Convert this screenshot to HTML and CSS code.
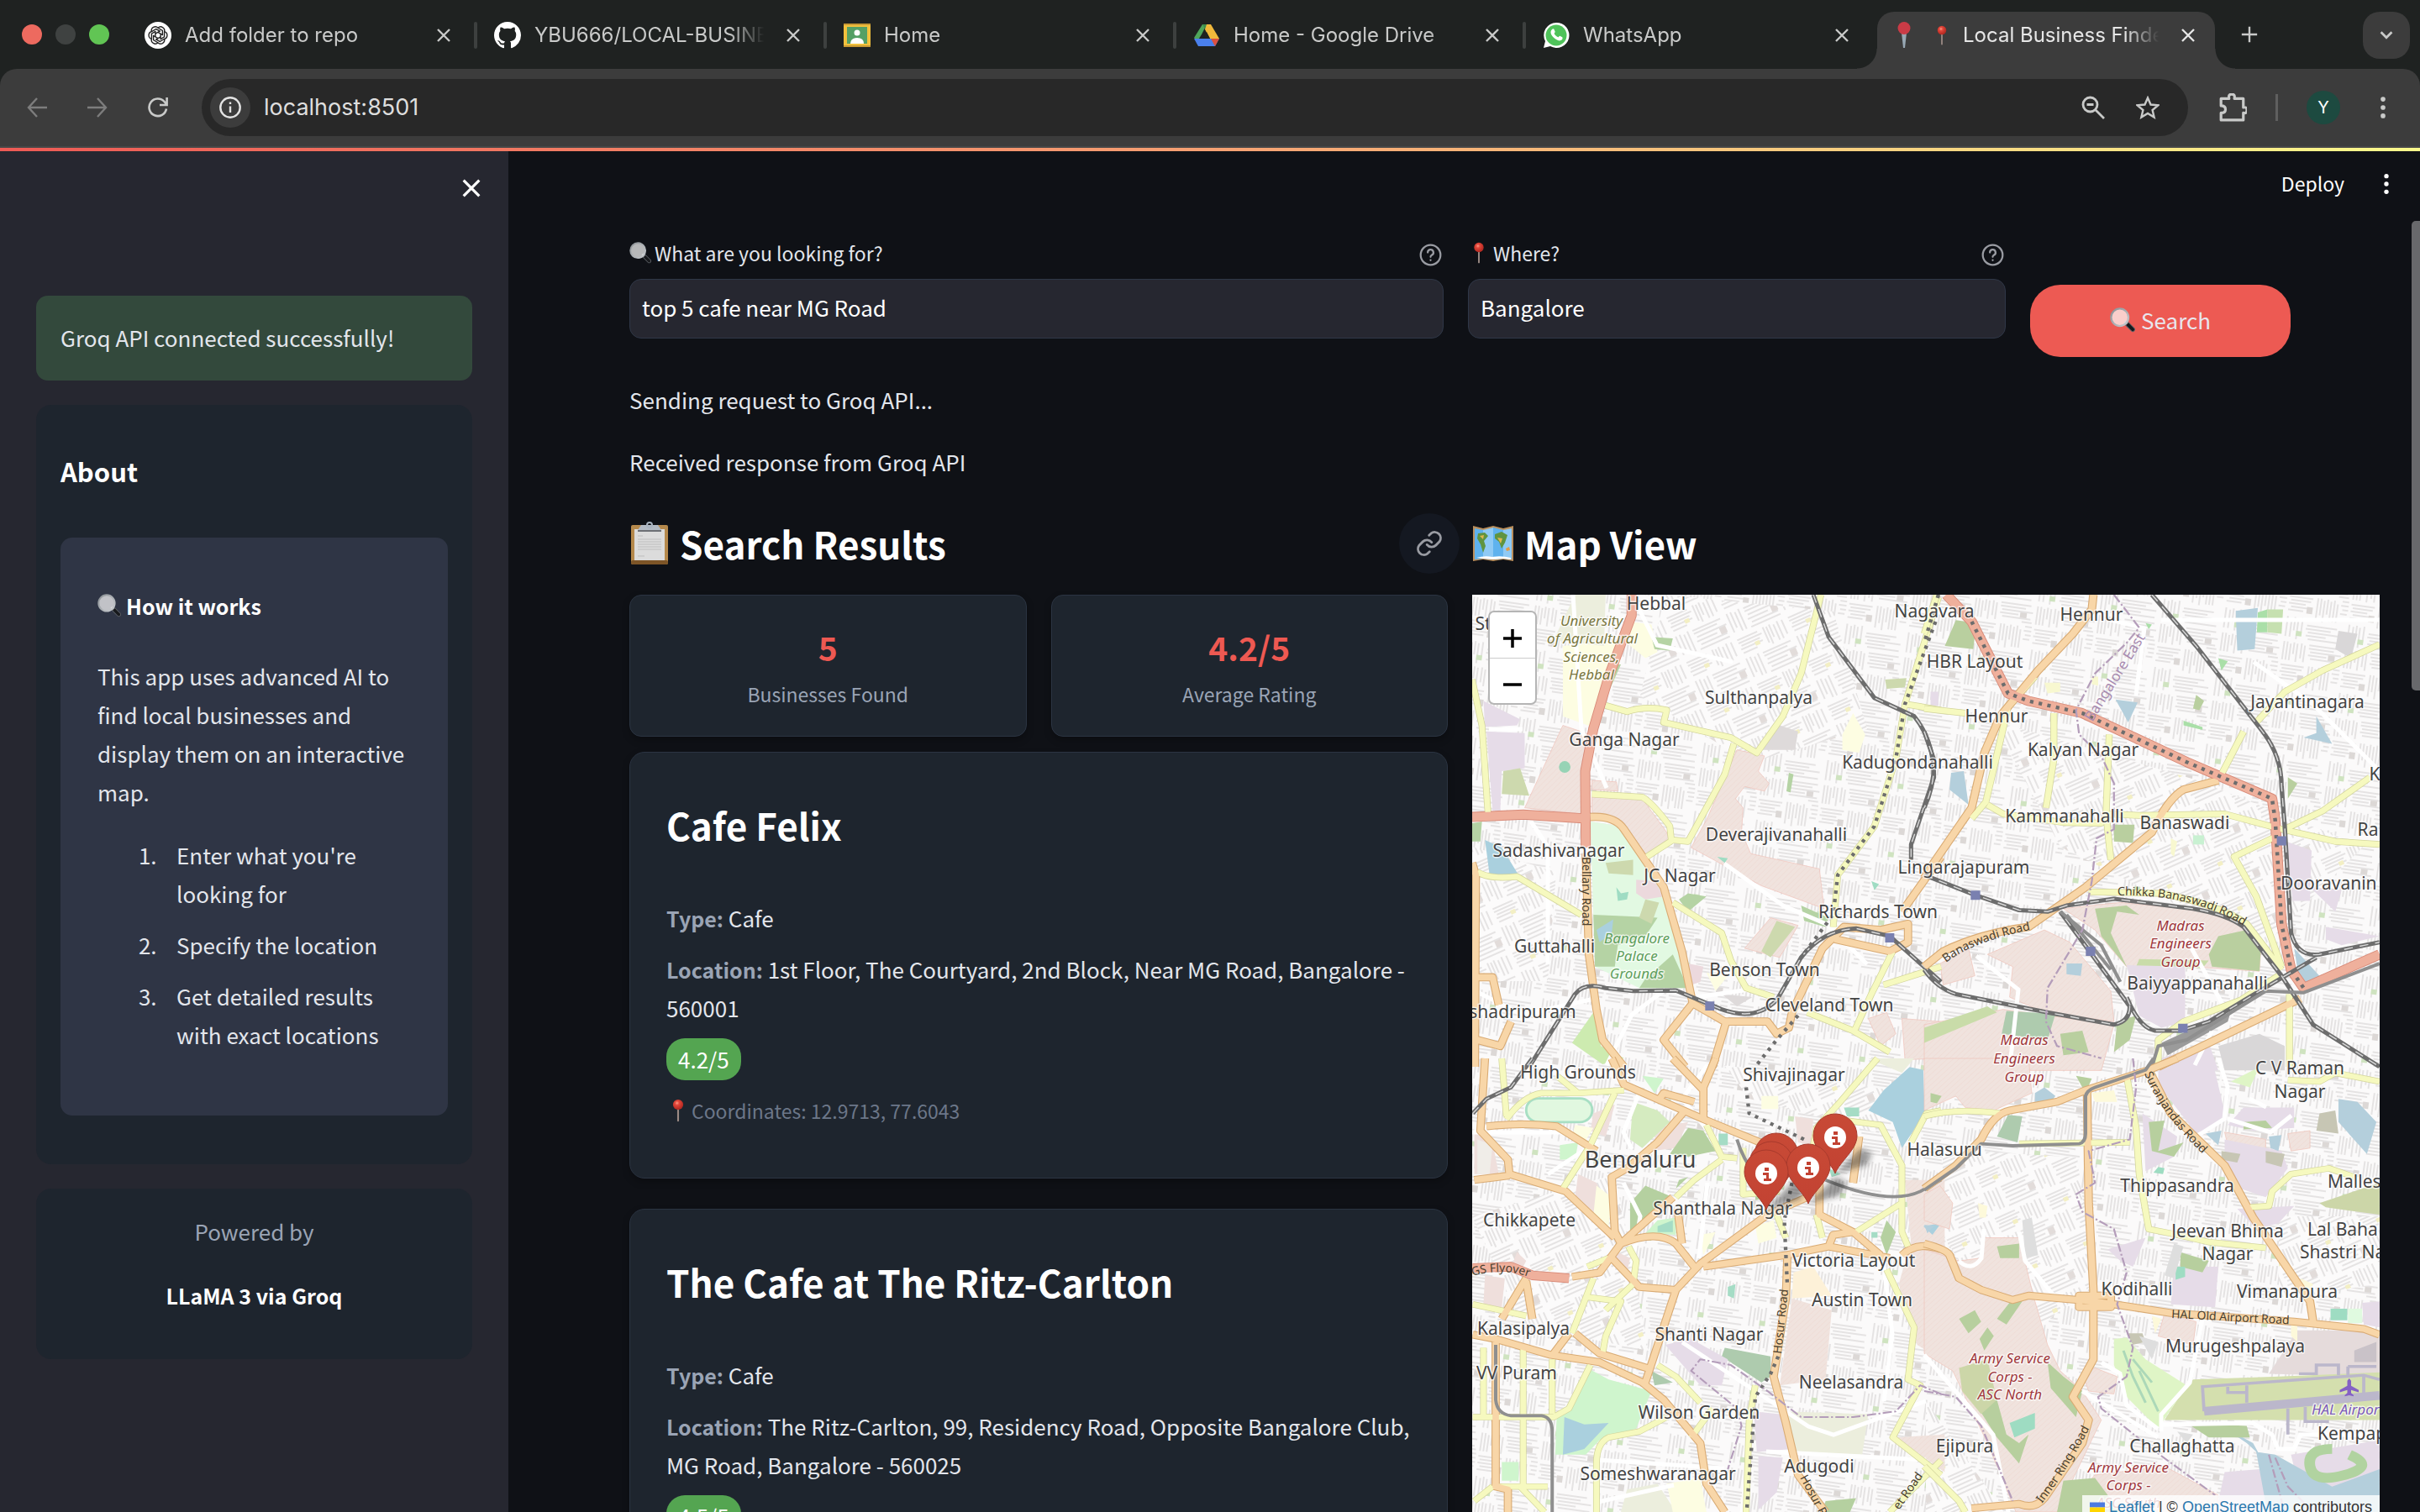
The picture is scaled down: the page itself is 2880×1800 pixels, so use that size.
FILE: index.html
```html
<!DOCTYPE html>
<html lang="en">
<head>
<meta charset="utf-8">
<title>Local Business Finder</title>
<link rel="stylesheet" href="styles.css">
</head>
<body>
<svg class="sprite" aria-hidden="true">
  <defs>
    <linearGradient id="metal" x1="0" y1="0" x2="1" y2="1"><stop offset="0" stop-color="#8a9094"/><stop offset="1" stop-color="#c9ccd0"/></linearGradient>
    <radialGradient id="ball" cx=".4" cy=".35" r=".6"><stop offset="0" stop-color="#ff9a85"/><stop offset=".35" stop-color="#e2463a"/><stop offset="1" stop-color="#b52a22"/></radialGradient>
    <symbol id="i-close" viewBox="0 0 24 24"><path d="M5 5l14 14M19 5L5 19" fill="none" stroke="currentColor" stroke-width="2.4"/></symbol>
    <symbol id="i-loupe" viewBox="0 0 32 32">
      <path d="M22 21l7 7" stroke="#5c6066" stroke-width="6" stroke-linecap="round"/>
      <path d="M22.500 21.500l6.500 6.500" stroke="#17191c" stroke-width="4" stroke-linecap="round"/>
      <path d="M19 18l3 3" stroke="#8a8d90" stroke-width="3.500"/>
      <circle cx="12.500" cy="12.500" r="11" fill="#fff" fill-opacity=".7" stroke="url(#metal)" stroke-width="2.400"/>
    </symbol>
    <symbol id="i-pin" viewBox="0 0 16 32">
      <path d="M8 12v18" stroke="#9b8a84" stroke-width="2.4" stroke-linecap="round"/>
      <circle cx="8" cy="8" r="7" fill="url(#ball)"/>
    </symbol>
    <symbol id="i-help" viewBox="0 0 24 24"><g fill="none" stroke="currentColor" stroke-width="2" stroke-linecap="round"><circle cx="12" cy="12" r="10.5"/><path d="M9 9.4a3 3 0 1 1 4.3 2.7c-.9.5-1.3 1-1.3 1.9M12 17.4v.2"/></g></symbol>
    <symbol id="i-dots" viewBox="0 0 24 48"><g fill="currentColor"><circle cx="12" cy="10" r="4"/><circle cx="12" cy="24" r="4"/><circle cx="12" cy="38" r="4"/></g></symbol>
  </defs>
</svg>

<header class="browser">
  <div class="tabstrip">
    <div class="lights"><span class="light red"></span><span class="light grey"></span><span class="light green"></span></div>
    <div class="tab">
      <svg class="fav" viewBox="0 0 32 32"><circle cx="16" cy="16" r="16" fill="#fff"/><g fill="none" stroke="#222" stroke-width="1.4"><g id="petal"><path d="M16 7.2a4.6 4.6 0 0 1 7.6 4.6v6l-5 3"/><path d="M16 12.400l5.200 3"/></g><use href="#petal" transform="rotate(60 16 16)"/><use href="#petal" transform="rotate(120 16 16)"/><use href="#petal" transform="rotate(180 16 16)"/><use href="#petal" transform="rotate(240 16 16)"/><use href="#petal" transform="rotate(300 16 16)"/></g></svg>
      <span class="tab-title">Add folder to repo</span>
      <button class="tab-close" aria-label="Close tab"><svg><use href="#i-close"/></svg></button>
    </div>
    <div class="tab">
      <svg class="fav" viewBox="0 0 16 16"><path fill="#fff" d="M8 0C3.580 0 0 3.580 0 8c0 3.540 2.290 6.530 5.470 7.590.4.070.550-.170.550-.380 0-.190-.010-.820-.010-1.490-2.010.370-2.530-.490-2.690-.940-.090-.230-.480-.940-.820-1.130-.280-.150-.680-.520-.010-.530.630-.010 1.080.580 1.230.820.720 1.210 1.870.870 2.330.660.070-.520.280-.870.510-1.070-1.780-.2-3.640-.890-3.640-3.950 0-.870.310-1.590.820-2.150-.080-.2-.360-1.020.080-2.120 0 0 .670-.210 2.200.820a7.600 7.600 0 0 1 4 0c1.530-1.040 2.200-.820 2.200-.820.440 1.100.160 1.920.080 2.120.510.560.820 1.270.820 2.150 0 3.070-1.870 3.750-3.650 3.950.290.250.540.730.540 1.480 0 1.070-.010 1.930-.010 2.200 0 .210.150.460.550.380A8 8 0 0 0 16 8c0-4.420-3.580-8-8-8z"/></svg>
      <span class="tab-title">YBU666/LOCAL-BUSINESS</span>
      <button class="tab-close" aria-label="Close tab"><svg><use href="#i-close"/></svg></button>
    </div>
    <div class="tab">
      <svg class="fav" viewBox="0 0 32 32"><rect y="2" width="32" height="28" fill="#f2c13d"/><path d="M0 28h32v2H0zM0 2h32v2H0z" fill="#c99a34"/><rect x="4" y="6" width="24" height="20" fill="#55a065"/><circle cx="16" cy="13" r="3.500" fill="#fff"/><path d="M8 26q0-7 8-7t8 7z" fill="#fff"/></svg>
      <span class="tab-title">Home</span>
      <button class="tab-close" aria-label="Close tab"><svg><use href="#i-close"/></svg></button>
    </div>
    <div class="tab">
      <svg class="fav" viewBox="0 0 32 32"><path fill="#4fa55b" d="M11 3h5l-6 12-5 8-4-4z"/><path fill="#3b8b4a" d="M11 3h10l-5 9z"/><path fill="#f2b93b" d="M21 3l10 17H20l-6-11 2-6z"/><path fill="#4a80ec" d="M1 20h30l-5 9H6z"/><path fill="#dc5040" d="M21 20h10l-5 9z"/><path fill="#1f2221" d="M16 12l4 8h-8z"/></svg>
      <span class="tab-title">Home - Google Drive</span>
      <button class="tab-close" aria-label="Close tab"><svg><use href="#i-close"/></svg></button>
    </div>
    <div class="tab">
      <svg class="fav" viewBox="0 0 32 32"><path fill="#fff" d="M16 1a15 15 0 1 1-7 28l-8 2 2-8A15 15 0 0 1 16 1z"/><circle cx="16" cy="16" r="12.500" fill="#4fc35a"/><path fill="#fff" d="M11 9c1-1 2-1 2.500 0l1.200 2.800c.2.700-1.200 1.700-1 2.200 1 2 2.500 3.400 4.500 4.300.6.300 1.500-1.800 2.200-1.600l2.800 1.500c.8.500.3 2.700-.7 3.400-2 1.400-4.500 1-8-1.600-3.500-2.700-5-5.500-5-7.500 0-1.500.7-2.700 1.500-3.500z"/></svg>
      <span class="tab-title">WhatsApp</span>
      <button class="tab-close" aria-label="Close tab"><svg><use href="#i-close"/></svg></button>
    </div>
    <div class="tab active">
      <svg class="fav" viewBox="0 0 32 32"><path d="M13 13h6l-2 18h-2z" fill="#98a8b4"/><circle cx="16" cy="7.500" r="7.500" fill="#c93b46"/></svg>
      <span class="tab-title"><svg class="tab-pin"><use href="#i-pin"/></svg>Local Business Finder</span>
      <button class="tab-close" aria-label="Close tab"><svg><use href="#i-close"/></svg></button>
    </div>
    <button class="new-tab" aria-label="New tab"><svg viewBox="0 0 24 24"><path d="M12 2v20M2 12h20" stroke="currentColor" stroke-width="2.600"/></svg></button>
    <button class="tab-search" aria-label="Search tabs"><svg viewBox="0 0 24 24"><path d="M5 8l7 7 7-7" fill="none" stroke="currentColor" stroke-width="3"/></svg></button>
  </div>
  <div class="toolbar">
    <nav class="nav">
      <button class="dim" aria-label="Back"><svg viewBox="0 0 24 24"><path d="M12 1L2 12l10 11M2 12h22" fill="none" stroke="currentColor" stroke-width="2.400"/></svg></button>
      <button class="dim" aria-label="Forward"><svg viewBox="0 0 24 24"><path d="M12 1l10 11-10 11M22 12H0" fill="none" stroke="currentColor" stroke-width="2.400"/></svg></button>
      <button aria-label="Reload"><svg viewBox="0 0 24 24"><path d="M22 13.500A10.300 10.300 0 1 1 19.600 5L22 8M22.600 0v9H14" fill="none" stroke="currentColor" stroke-width="2.600"/></svg></button>
    </nav>
    <div class="omnibox">
      <button class="site-info" aria-label="Site information"><svg viewBox="0 0 26 26"><g fill="none" stroke="currentColor" stroke-width="2.400"><circle cx="13" cy="13" r="11.700"/><path d="M13 11.500v7.500M13 6.500v2.600"/></g></svg></button>
      <input class="url" aria-label="Address" value="localhost:8501">
      <button aria-label="Zoom"><svg viewBox="0 0 28 28"><g fill="none" stroke="currentColor" stroke-width="2.800"><circle cx="10.500" cy="10.500" r="8.500"/><path d="M17 17l10 10M6.500 10.500h8"/></g></svg></button>
      <button aria-label="Bookmark"><svg viewBox="0 0 28 28"><path d="M14 2.500l3.500 8 8.800.8-6.700 5.700 2 8.600L14 21l-7.600 4.600 2-8.600-6.700-5.700 8.800-.8z" fill="none" stroke="currentColor" stroke-width="2.400"/></svg></button>
    </div>
    <div class="actions">
      <button aria-label="Extensions"><svg viewBox="0 0 32 32"><path d="M3 6h9q-1-5 3-5t3 5h10v10q4-1 4 3t-4 3v8H3v-8q5 0 5-4t-5-4z" fill="none" stroke="currentColor" stroke-width="3" stroke-linejoin="round"/></svg></button>
      <span class="bar"></span>
      <button class="avatar" aria-label="Profile">Y</button>
      <button aria-label="Menu"><svg class="dots"><use href="#i-dots"/></svg></button>
    </div>
  </div>
</header>

<div class="rainbow"></div>

<div class="app">
  <aside class="sidebar">
    <div class="sidebar-head"><button aria-label="Close sidebar"><svg><use href="#i-close"/></svg></button></div>
    <div class="sidebar-body">
      <p class="success">Groq API connected successfully!</p>
      <section class="panel about">
        <h3>About</h3>
        <div class="how">
          <h4><svg class="emoji"><use href="#i-loupe"/></svg>How it works</h4>
          <p>This app uses advanced AI to find local businesses and display them on an interactive map.</p>
          <ol><li>Enter what you're looking for</li><li>Specify the location</li><li>Get detailed results with exact locations</li></ol>
        </div>
      </section>
      <section class="panel powered"><p>Powered by</p><p><strong>LLaMA 3 via Groq</strong></p></section>
    </div>
  </aside>

  <main class="main">
    <div class="app-head"><button class="deploy">Deploy</button><button aria-label="App menu"><svg class="dots"><use href="#i-dots"/></svg></button></div>
    <div class="content">
      <form class="search">
        <div class="field">
          <div class="label-row"><label for="what"><svg class="emoji"><use href="#i-loupe"/></svg>What are you looking for?</label><button type="button" aria-label="Help"><svg><use href="#i-help"/></svg></button></div>
          <input id="what" value="top 5 cafe near MG Road">
        </div>
        <div class="field">
          <div class="label-row"><label for="where"><svg class="emoji"><use href="#i-pin"/></svg>Where?</label><button type="button" aria-label="Help"><svg><use href="#i-help"/></svg></button></div>
          <input id="where" value="Bangalore">
        </div>
        <button type="button" class="go"><svg class="emoji"><use href="#i-loupe"/></svg>Search</button>
      </form>
      <p class="log">Sending request to Groq API...</p>
      <p class="log">Received response from Groq API</p>

      <div class="columns">
        <section class="results">
          <h2>
            <svg class="clipboard" viewBox="0 0 48 52"><rect x="2" y="4" width="44" height="47" rx="2" fill="#b5894c"/><rect x="2" y="46" width="44" height="5" rx="2" fill="#7d5527"/><rect x="6" y="9" width="36" height="37" fill="#dcdcdc"/><path d="M10 17h6M10 21h28M10 24h28M10 27h28M10 30h28M10 33h28M10 41h8" stroke="#bdbdbd"/><path d="M10 10l4-6h20l4 6z" fill="#b3bac3"/><path d="M10 10h28v2H10z" fill="#6d7075"/><circle cx="24" cy="4" r="3" fill="none" stroke="#a9b4c0" stroke-width="2"/></svg>
            Search Results
            <a class="anchor" href="#results" aria-label="Link to results"><svg viewBox="0 0 24 24"><path d="M10 13a5 5 0 0 0 7.500.5l3-3a5 5 0 0 0-7-7l-1.700 1.700M14 11a5 5 0 0 0-7.500-.5l-3 3a5 5 0 0 0 7 7l1.700-1.700" fill="none" stroke="currentColor" stroke-width="2" stroke-linecap="round"/></svg></a>
          </h2>
          <div class="metrics">
            <div class="metric"><strong>5</strong><span>Businesses Found</span></div>
            <div class="metric"><strong>4.2/5</strong><span>Average Rating</span></div>
          </div>
          <article class="card">
            <h3>Cafe Felix</h3>
            <p><b>Type:</b> Cafe</p>
            <p><b>Location:</b> 1st Floor, The Courtyard, 2nd Block, Near MG Road, Bangalore - 560001</p>
            <span class="badge">4.2/5</span>
            <p class="coords"><svg class="emoji"><use href="#i-pin"/></svg>Coordinates: 12.9713, 77.6043</p>
          </article>
          <article class="card">
            <h3>The Cafe at The Ritz-Carlton</h3>
            <p><b>Type:</b> Cafe</p>
            <p><b>Location:</b> The Ritz-Carlton, 99, Residency Road, Opposite Bangalore Club, MG Road, Bangalore - 560025</p>
            <span class="badge">4.5/5</span>
          </article>
        </section>

        <section class="map-col">
          <h2>
            <svg class="mapicon" viewBox="0 0 50 44"><path d="M1 1l12 3L25 1l12 3 12-3v42l-12-2-12 2-12-2-12 2z" fill="#b98f5d"/><path d="M3 4l10 2v34L3 41zM25 3l12 3v34l-12 1z" fill="#5fb2ee"/><path d="M13 6l12-3v38l-12-1zM37 6l10-2v37l-10-1z" fill="#8fcaf5"/><path d="M7 10l8-1 4 4-5 6 2 6-3 8-3-10-4-7zM27 11l8-3 7 4-3 9-4 7-3-8-5-4z" fill="#5f9440"/><path d="M9 13l5-1-1 5zM30 15l6 1-2 6z" fill="#e0b64e"/><path d="M40 28l4-2 1 4-4 1z" fill="#e39b45"/><path d="M5 39q10-3 19-1 10-2 22 1v2l-9-1-12 1-12-1z" fill="#fff"/></svg>
            Map View
          </h2>
          <div class="map">
            <svg class="map-art" viewBox="0 0 1080 1100" preserveAspectRatio="xMidYMid slice">
              <defs>
                <pattern id="st" width="74" height="82" patternUnits="userSpaceOnUse" patternTransform="rotate(8)">
                  <rect width="74" height="82" fill="#fbfafa"/>
                  <path d="M3 2v22M7 2v22M11 4v20M15 2v14M19 3v22M24 2v18M28 4v20M33 3h36M33 7h30M35 11h37M33 15h22M36 19h34M60 23h12M2 30h28M4 34h24M2 38h20M5 42h26M2 46h18M36 28v26M40 28v20M44 30v26M48 28v18M52 30v24M56 28v26M60 32v22M65 28h8M64 33h9M66 38h7M64 43h8M3 54v24M8 56v22M12 54v16M16 56v24M21 54v20M27 62h36M26 66h30M29 70h40M27 74h24M30 78h38" stroke="#d0cdcd" stroke-width="1" fill="none"/>
                  <path d="M57 12h8v6h-8zM24 40h7v8h-7z" fill="#dcd8d6"/><path d="M15 70h7v6h-7z" fill="#cfe3c0"/>
                </pattern>
                <pattern id="st2" width="66" height="58" patternUnits="userSpaceOnUse" patternTransform="rotate(-24)">
                  <rect width="66" height="58" fill="#fcfbfb"/>
                  <path d="M2 4h26M2 8h30M4 12h24M2 16h28M3 21h18M36 2v20M40 3v22M44 2v16M49 4v20M54 2v22M60 3v18M3 28v24M8 28v20M13 30v24M18 28v26M24 30h36M24 34h30M26 39h38M24 44h26M27 49h34M24 54h38" stroke="#cecbcb" stroke-width="1" fill="none"/>
                  <path d="M54 40h8v8h-8z" fill="#e2dcda"/><path d="M20 14h6v5h-6z" fill="#f3efc4"/>
                </pattern>
                <pattern id="hatch" width="13" height="13" patternUnits="userSpaceOnUse" patternTransform="rotate(45)"><rect width="13" height="13" fill="#f0e3de"/><path d="M0 0v13" stroke="#eed2cb" stroke-width="2"/></pattern>
                <filter id="soft" x="-50%" y="-50%" width="200%" height="200%"><feGaussianBlur stdDeviation="3"/></filter>
                <linearGradient id="mk" x1="0" x2="0" y1="0" y2="1"><stop offset="0" stop-color="#c84a36"/><stop offset="1" stop-color="#c24232"/></linearGradient>

                <g id="y1"><path d="M33 300L65 450 85 740M1175 22L1110 280 1050 420 965 540 880 490 660 440 670 400Q600 385 540 405L470 385M890 510L860 610 800 720 740 830 690 825 605 880M425 675L590 685Q620 700 680 780L685 825M1560 30L1450 380 1568 400M1450 380L1420 560 1350 780 1230 940 1215 1110M50 930Q90 955 180 945L390 1070M690 1030L850 1130 880 1220 930 1310 1020 1340M1130 1390L1280 1450 1400 1520M1410 1190L1340 1330 1280 1460M1380 1300L1568 1240"/></g>
                <g id="o1"><path d="M420 750Q500 745 530 790L660 980 720 1190 755 1360 660 1480 730 1568M405 870L415 1200 440 1380 460 1480 530 1568M33 900L45 940 42 1568M50 1275H100L120 1365M160 1420L125 1500 50 1480M755 1360L860 1420 1000 1420 1030 1460 1070 1440 1080 1390 1180 1180 1250 1110 1370 1120 1460 1100 1460 1160 1400 1190 1220 1150M865 1420L820 1568M1440 1060L1568 880"/></g>
                <g id="r1"><path d="M555 22V90L480 290 430 460 403 600 405 850M33 750L200 742 405 755"/></g>
                <g id="t1"><path d="M1150 22L1200 160 1350 360 1480 420Q1545 500 1545 620L1470 840V890M220 1568L370 1330Q400 1290 470 1310L560 1320 700 1318 850 1380Q960 1420 1030 1350L1110 1210Q1180 1120 1290 1115L1400 1140 1568 1290"/></g>

                <g id="y2"><path d="M350 290L265 390 245 480 195 700 150 755M0 395L130 410M410 410V560L385 720M585 480L575 740 590 890M200 710L250 740 440 768 560 770 580 740 680 745 950 740 1130 790 1300 830 1440 840M1440 185L1260 270 1140 340 1050 440M1010 470L940 610M1140 790L1260 730 1410 620M1110 815L980 880 1050 1010 1130 1240M520 995L750 1000Q940 1040 1020 1100L1130 1250M1155 1330V1568M740 1568V1480L820 1420 1000 1350 1120 1270M40 22L0 150"/></g>
                <g id="o2"><path d="M535 22L530 70 470 150 360 270 240 420 190 540 150 720 30 900 0 950M0 1240L60 1190Q180 1130 330 1110L510 980 720 800Q770 690 820 660L930 630M740 1568L860 1510 1190 1345"/></g>
                <g id="r2"><path d="M70 22L150 110 265 345 330 370 500 410 830 570 1100 690 1110 760 1130 1100 1160 1250 1200 1310 1440 1200"/></g>
                <g id="t2"><path d="M720 22L860 190 1070 470Q1130 550 1130 650L1140 780 1160 1130Q1180 1210 1250 1200L1440 1160M0 940L160 1005 300 1055 390 1060 450 1040 600 1018 850 1050Q960 1070 1010 1110L1130 1270 1230 1430 1440 1568M0 1250Q40 1310 100 1330L390 1390 600 1430Q650 1420 650 1370L530 1200 430 1060M640 1340Q680 1440 730 1450H810L900 1420 1060 1320 1240 1210M0 470L30 560Q35 640 0 720"/></g>

                <g id="y3"><path d="M130 0L145 200M145 210Q200 130 260 120L380 120 530 110M500 120L420 300 330 450M310 60L380 120M1360 0L1230 160 1160 240 1150 300M1220 210L1370 230 1440 370V600L1460 650M1440 500L1290 600M800 230L850 340 900 345M850 350L760 420 700 480M920 310V470L1040 460M1160 540L1180 620M1030 540L1060 620M545 650L570 700 560 780 470 870M430 760L360 950M410 720L480 690M410 825L520 840 470 960 460 1020M420 1060L350 1210 300 1240H35M70 1000V1240M200 1000V1480M295 1040V1230M640 1060L700 1100 780 1190M670 1240L580 1290 480 1310Q440 1330 440 1400V1568M960 1130L940 1250 930 1568M1390 730L1480 930 1460 1110 1500 1130 1410 1310 1568 1440M1568 1390L1400 1568M35 850L210 890M1568 180L1520 190 1470 290M820 1210L750 1310M40 1530L100 1480M190 1480L270 1568M100 1480H280"/></g>
                <g id="o3"><path d="M75 0L60 250 150 350 155 400 340 460 500 620M40 420L155 405M80 235Q200 220 310 235L440 320M490 0L530 90 660 150 790 210 975 290M690 0L790 110M730 180L640 290 540 380 490 410 500 600 520 640M830 0L790 100V210M520 640L690 480M520 640Q640 590 700 640L760 720M705 520L720 640M520 640L450 740 360 755M490 690L580 790 700 800 780 710 1000 540 1130 480M700 800L600 1120M790 720L1060 680 1200 650 1300 670 1400 690M35 955L110 970 290 1025 450 1050 590 1120 660 1180 780 1330 800 1470 860 1568M370 950L450 1020 620 1075M350 950L300 1020M210 760L130 900M210 770L230 900M1065 680L1060 830 1020 1100 1060 1260 1100 1440 1190 1568M1170 420V540L1280 600 1370 680M1300 270L1280 430M1200 650L1215 610 1280 600M1440 680Q1490 630 1568 660M110 980V1480L150 1490V1568M640 150L660 120 760 150"/></g>
                <g id="r3"><path d="M35 725L160 720 230 750 350 760"/></g>
                <g id="t3"><path d="M35 190L80 140 160 100 230 0"/></g>

                <g id="y4"><path d="M0 200Q100 170 240 190M640 60L670 240 680 400 710 590 780 605 900 635 1080 655M300 295L650 290M1030 515L1090 510 1100 460 1160 400 1280 380 1360 410M1150 75L1250 80 1300 50 1440 80M0 1410L110 1530 130 1568"/></g>
                <g id="o4"><path d="M0 450L100 370 180 280Q220 190 270 180L420 150 510 110 710 40 800 0M515 110L520 500 535 800V1040L470 1170 520 1250 500 1330 380 1520Q350 1560 300 1540L150 1555M0 640Q70 660 80 680L110 760 180 800 280 835 330 820 540 840 780 880 1170 910 1390 935 1440 955M710 40L780 190 950 370 1040 550 1220 840 1230 910M490 820H590V860H490Z"/></g>
                <path id="lp1" d="M564 438Q594 414 664 399"/>
                <path id="lp2" d="M768 358Q860 356 921 396"/>
                <path id="lp4" d="M678 1082Q706 1046 736 990"/>
                <path id="lp5" d="M800 570Q820 620 876 672"/>
                <path id="lp6" d="M0 811Q40 800 72 814"/>
              </defs>
              <rect width="1080" height="1102" fill="url(#st)"/>
              <path d="M230 0L430 20 470 160 330 200 200 120ZM620 150L860 220 1060 300 940 420 700 300ZM0 740L170 690 210 900 60 870ZM560 660L720 670 740 820 640 900 560 760ZM300 560L500 590 480 640 330 600ZM0 300L100 330 90 460 0 460ZM960 740H1080V820L960 840ZM540 960L640 1102H540Z" fill="url(#st2)"/>

              <!-- Land use, north west -->
              <g transform="matrix(.3635 0 0 .3635 -12 -8)">
                <path fill="url(#hatch)" stroke="#f0c4bb" stroke-width="2" d="M330 450L420 480 390 740 205 720ZM425 630L505 635 510 665 425 660ZM425 685L590 690 670 800 680 830 600 875 520 770 425 735ZM900 530L990 550 970 600 1005 640 990 665 925 650 895 690 920 720 915 800 945 870 1170 920 1185 1050 980 975 750 850 800 760ZM1010 1080L1100 1105 1040 1210 925 1180ZM1440 1410L1568 1420V1540L1450 1545ZM1330 1410L1390 1390 1420 1460 1370 1500Z"/>
                <path fill="#e6dce8" d="M70 370L190 430 180 450 75 455ZM80 470L205 475V590L130 600 125 730 100 730Z"/>
                <path fill="#fdfde2" d="M330 190L520 170 440 460 330 420ZM550 110L620 120 640 210 600 230 540 180ZM1280 410L1320 480 1300 540 1245 530 1245 480ZM660 1080L700 1140 690 1200 620 1130ZM800 1260L870 1270 830 1320Z"/>
                <path fill="#eceedd" d="M370 22H470L465 190 300 170Z"/>
                <path fill="#e2f9e2" d="M420 765L520 780 600 890 690 1080 740 1310 580 1310 435 1240Z"/>
                <path fill="#b5d3a4" d="M430 1070L540 1075 640 1080 600 1140 510 1170 500 1240 435 1240ZM690 1200L740 1310 580 1310 600 1280ZM620 160L690 165 680 205 630 200ZM710 1020L740 1000 800 1010 740 1060ZM33 770L65 765 60 830 33 830ZM1110 1040L1200 1080 1190 1110 1120 1090ZM1070 605L1085 610 1075 670 1062 665ZM480 340L500 250 520 250Z"/>
                <path fill="#cdd9ae" d="M470 900L560 890 560 940 480 935ZM600 1020L645 1030 620 1100 580 1080ZM135 600L190 590 220 680 130 675ZM1030 1090L1090 1110 1010 1210 980 1190ZM1385 300L1455 295 1450 325 1390 330Z"/>
                <path fill="#ecd9dd" d="M570 955L630 960 660 1010 600 1020 570 1000ZM740 1230L790 1240 780 1290 750 1300Z"/>
                <path fill="#cdebb0" d="M430 1390L455 1500 530 1540 460 1560 360 1490Z"/>
                <path fill="#aad0de" d="M75 825L130 850 185 940 90 940ZM440 1120L495 1085 490 1130 450 1160Z"/>
                <path fill="#dedada" d="M1040 450L1100 470 1090 530 980 530ZM850 1330L950 1340 900 1370Z"/>
                <circle cx="336" cy="586" r="19" fill="#97d3b5"/><path fill="#9fdcc3" d="M505 980L520 1000 545 995 540 1020 510 1025ZM1340 960L1365 970 1350 990ZM835 880L870 885 860 900Z"/>
              </g>
              <!-- Land use, north east -->
              <g transform="matrix(.3763 0 0 .3635 538 -8)">
                <path fill="url(#hatch)" stroke="#f0c4bb" stroke-width="2" d="M440 1050L620 1030 870 1055 1000 1100 1065 1180 1060 1255 840 1240 640 1240 540 1120ZM380 1120L460 1160 590 1320 600 1420 380 1390 270 1340 280 1240 200 1200ZM0 1430L250 1380 600 1430 560 1580H0ZM50 1230L140 1180 160 1270 60 1300Z"/>
                <path fill="#b9cf9f" d="M540 1050L640 1040 680 1070 610 1060 590 1130 640 1240 560 1140ZM930 1140L1020 1120 1065 1180 1060 1255 910 1240 900 1200ZM610 1420L670 1400 650 1480 600 1520ZM600 775H665L660 835 600 830ZM430 1460L500 1450 520 1520 440 1530ZM860 350L885 370 870 400 850 395ZM1150 620L1180 640 1150 690ZM100 105L165 115 155 200 65 190Z"/>
                <path fill="#aecbae" d="M260 1385L415 1395 390 1480 245 1460Z"/><path fill="#c9dca9" d="M0 1440L200 1370 230 1390 0 1490ZM680 1215L900 1220 880 1245 670 1240Z"/>
                <path fill="#e6dce8" d="M640 1235L825 1240V1420L750 1440 680 1400ZM1145 830L1225 860 1220 1025 1165 1025ZM750 1540L900 1490 930 1580H740ZM1220 980L1320 990 1300 1060ZM1270 1110L1440 1140 1320 1170 1270 1150ZM20 340H45V385H20Z"/>
                <path fill="#b4cfdc" d="M985 75L1055 65 1045 200 990 205ZM605 365L675 375 645 440ZM1240 420L1290 510 1200 490 1240 475ZM85 605L125 600 140 710 80 660ZM1170 1180L1250 1270 1190 1310ZM450 1230L500 1230 495 1270 450 1265Z"/>
                <path fill="#aadfa8" d="M1055 80L1085 70V145H1052ZM930 230L960 240 940 270ZM820 435L880 455V465L820 450ZM700 115L720 120 710 135Z"/><path fill="#c6e0b0" d="M1085 70L1135 70 1130 150 1085 145Z"/>
                <path fill="#d9d7d8" d="M930 1500L1060 1460 1140 1500V1580H950ZM1310 140L1370 150 1350 230 1300 200Z"/>
                <path fill="#9b9b9b" d="M750 1490L970 1385 960 1420 770 1530Z"/>
                <path fill="#f8f8d0" d="M380 310L430 310 430 340 390 345ZM780 820L800 830 790 880 780 870ZM530 290L550 290 550 320 530 315Z"/>
                <path fill="#c9f1d2" d="M850 810L885 810 885 840 850 840Z"/>
              </g>
              <!-- Land use, south west -->
              <g transform="matrix(.3635 0 0 .3444 -12 552)">
                <path fill="#efdfdc" d="M430 190L500 160 470 270 420 250ZM640 240L740 220 700 310 620 320ZM180 670L210 700 190 740 165 710ZM75 750L140 760 130 860 70 850ZM380 400L440 430 470 500 440 540 370 480ZM1090 200L1150 210 1140 300 1100 290ZM510 670L550 690 540 740 500 700ZM40 250L100 290 120 400 40 400Z"/>
                <path fill="url(#hatch)" d="M1080 830L1210 870 1190 1110 1040 1130ZM1430 780L1490 550 1580 540V1050L1490 990 1460 900ZM1450 420H1580V700L1470 640ZM1420 1310L1580 1300V1430Z"/>
                <path fill="#fdf1d8" d="M1085 740L1150 720 1210 820 1080 830Z"/>
                <path fill="#cff5cd" d="M410 1070L480 1110 620 1150 570 1280 450 1320 405 1370H305L310 1230 350 1200ZM130 1395H185V1460H130ZM590 60L660 70 630 120ZM320 300L380 290 370 350 320 350ZM640 560L700 550 700 610 600 605Z"/>
                <path fill="#aad0de" d="M335 1240L400 1265 480 1260 400 1350 330 1370ZM1465 30L1510 40 1515 190 1440 310 1410 220 1330 180 1380 110ZM1510 580L1568 570 1540 610Z"/>
                <path fill="#b5d0a0" d="M600 440L690 480 550 610V500ZM740 240L790 250 830 320 740 340 680 330ZM960 440L1000 480 960 490ZM1390 560L1420 600 1390 680 1370 620ZM1190 1530L1290 1520 1270 1568H1180ZM1230 1350L1280 1340 1270 1380ZM710 420L740 410 700 450Z"/>
                <path fill="#d5ebc0" d="M560 150L640 180 680 220 590 310 550 280Z"/>
                <path fill="#aecbae" d="M860 1000L1010 1030V1100L980 1120 850 1030ZM620 1080L690 1120 630 1130Z"/>
                <path fill="#e6dce8" d="M665 990L750 970 870 1040 850 1130 780 1130ZM955 1220L1040 1230 1080 1350 965 1360ZM970 1375L1050 1380 1030 1500 970 1560Z"/>
                <path fill="#eceedd" d="M1050 1220L1330 1230 1310 1370 1080 1370ZM540 1490L640 1470 700 1568H520ZM1330 0H1480L1440 50Z"/>
                <path fill="#fdfde2" d="M370 230L430 240 400 290 360 270ZM440 440L490 480 480 580 430 540ZM960 580L1020 560 1030 620 970 640ZM670 1470L780 1450 800 1568H690ZM980 130H1035V175H980ZM780 610L830 600 790 680Z"/>
                <path fill="#a5dcc5" d="M640 580L690 560 690 600 640 600ZM840 260H870V300H840ZM1250 170H1300V200H1260ZM1340 600H1360V620H1340ZM1200 380L1240 400 1210 410ZM870 790L895 780 890 830 870 820Z"/>
                <rect x="210" y="138" width="216" height="82" rx="40" fill="#e1f8e0" stroke="#a8dfc4" stroke-width="8"/>
                <path fill="#f0ede8" d="M50 280L100 300 90 400 50 400Z"/>
              </g>
              <!-- Land use, south east -->
              <g transform="matrix(.3763 0 0 .3444 538 552)">
                <path fill="url(#hatch)" stroke="#f0c4bb" stroke-width="2" d="M0 0H330L340 120 220 180 130 170 100 130 0 180ZM0 660L110 700 180 690 190 620H300L345 820 390 990 430 1080 500 1150 560 1250 420 1568H290L200 1330 90 1080 0 1020ZM540 1440L760 1410 930 1510 920 1580H420ZM500 1090L540 1070 610 1100 600 1160 520 1150ZM0 470L50 440 90 500 80 590 0 560ZM950 255L1080 280 1080 320 960 300ZM1150 260L1220 250V310L1160 320ZM760 880L860 910 850 990 740 960Z"/>
                <path fill="#e5dbdb" d="M1180 940H1440V1100L1090 1090Z"/>
                <path fill="#d4dfae" d="M850 1110L1120 1100 1440 1085V1250H760L800 1180Z"/>
                <path fill="none" stroke="#bbb7cb" stroke-width="30" d="M885 1220L1440 1165"/>
                <path fill="none" stroke="#bbb7cb" stroke-width="10" d="M885 1220L880 1135 1390 1095 1440 1110M1020 1130V1190M960 1135V1155H1020M1150 1210V1300M1205 1205V1255H1280M1390 1100V1160M1185 1090H1240V1060H1310V1095M1340 1065H1430M1340 1065V1100"/>
                <path fill="#c9c2c8" d="M1360 1010L1430 980V1050L1360 1050Z"/>
                <path fill="#e6dce8" d="M740 30L910 0 955 210 860 260 740 90ZM690 190L800 270 790 340 700 390ZM1010 170H1170V240L1040 250 960 230ZM950 280L1130 320 1150 380 1080 480 1000 450 950 360ZM790 720H930L920 860 780 850ZM990 520L1170 510 1120 570 1050 590ZM1160 1370L1440 1320V1440L1300 1480 1180 1460ZM950 1430L1060 1420 1100 1580H920ZM580 660L700 620 660 720 620 700ZM1385 845L1440 840V930L1390 920Z"/>
                <path fill="#b4cfdc" d="M1050 1360L1110 1370 1290 1480 1440 1420V1600H1090ZM1310 140L1370 150 1430 220 1400 330 1310 220ZM350 120L380 100 415 130 400 150 350 150ZM890 260L940 250 930 300ZM1090 270L1130 265 1120 320 1095 310ZM0 575L30 580 10 605ZM940 1270L1040 1330 1060 1370 1020 1330Z"/>
                <path fill="#dff5c6" d="M600 970L640 965 700 1040 830 1130 740 1280 640 1170 600 1060ZM970 80L1060 30 1030 100Z"/>
                <path fill="none" stroke="#acd8b8" stroke-width="8" d="M630 1010L660 1100 700 1190M660 1040L720 1120M680 1080L740 1220"/>
                <path fill="#aecbae" d="M265 195L310 200 295 290 230 270Z"/>
                <path fill="#b7cf9e" d="M230 650L300 640V690H240ZM830 1260L1020 1270 1030 1310 900 1310ZM160 1190L230 1180 260 1300 300 1330 330 1300 300 1400 230 1310ZM390 1050L440 1100 500 1150 480 1240 400 1140ZM420 1568L440 1460 540 1450 620 1568ZM710 220L760 215 740 320 820 290 790 340 720 320ZM810 670L900 700 880 740 810 720ZM110 900L160 870 180 910 140 950ZM200 930L220 960 190 1010 175 970ZM280 830L310 840 260 920 230 900ZM480 60L530 70 510 120ZM20 120L55 130 40 155 20 150ZM1010 220L1080 215 1100 240 1010 245Z"/>
                <path fill="none" stroke="#b1d3a0" stroke-width="34" d="M1290 1350Q1210 1350 1220 1410T1330 1440 1345 1370"/>
                <path fill="#ccd6a8" d="M1250 500L1440 430V540L1270 515ZM110 1070L200 1040 230 1180 180 1230 120 1150Z"/>
                <path fill="#9edcc2" d="M1285 865H1338V905H1285ZM270 1260L350 1225 350 1280 285 1310ZM795 720H825V755L795 765ZM740 375L760 380 755 400 725 395Z"/>
                <path fill="#e0fae0" d="M1340 865H1385V915H1340Z"/>
                <path fill="#c7c6b4" d="M940 320L1000 330 990 360 940 350ZM1080 320L1140 330 1130 375 1080 360ZM1250 190L1300 180 1310 260 1240 250ZM640 950L690 950 700 980 660 990Z"/>
                <path fill="#dedede" d="M310 560L340 550 360 680 320 690ZM760 750L790 640 820 650 790 760ZM680 960L740 980 720 1040ZM800 1290L850 1300 830 1330Z"/>
                <path fill="#fdf9da" d="M530 120L600 110 610 150 540 150ZM170 500L200 510 195 550 175 550ZM1160 900H1180V980L1160 960ZM720 890L750 900 730 950ZM1190 760L1230 780 1210 820Z"/>
              </g>

              <!-- Local streets -->
              <g class="lane">
                <path d="M120 0L130 160 160 230M20 160H60M190 0L220 60 310 80M0 470L60 500 150 480M70 270L90 300 90 440M160 560L190 500 230 470M260 480L330 470M300 320L370 370 440 400M420 390L470 440M290 650L250 600 280 560M640 560L650 470 600 430M760 30L800 40 790 120M820 30H1080M930 80L1000 130 1080 210M850 410L900 500M860 560L880 520"/>
                <path d="M200 590L180 640 190 660M90 690L150 650M180 700L200 740 190 800M280 700L270 790M490 800L500 880 490 960M250 890L400 990 430 1000 540 960M320 1102L330 1010M150 1030L300 1040M350 1020L540 1030M150 1080L240 1060M0 640L120 640"/>
                <path d="M888 552L899 586 895 624 865 643M609 755L606 790Q594 807 579 793M651 759L658 793 692 834M869 862L854 938 820 976V996M726 948L816 1003M820 988L929 986 952 1000 959 1017 978 1017 986 1000H1080M749 914L771 927 779 965 816 993M899 624L950 640 975 620M925 600L945 610M538 905L620 1000 640 1102"/>
              </g>

              <g class="roads" transform="matrix(.3635 0 0 .3635 -12 -8)"><use href="#y1" class="yc"/><use href="#o1" class="oc"/><use href="#r1" class="rc"/><use href="#y1" class="yf"/><use href="#o1" class="of"/><use href="#r1" class="rf"/><use href="#t1" class="tc"/><use href="#t1" class="tf"/><path class="dot" d="M1550 110L1450 380 1420 560 1350 780 1230 940 1215 1070 1110 1210M1100 1400L1030 1480 960 1568"/><path fill="#7a80b0" d="M1385 1131h30v30h-30zM796 1354h30v30h-30z"/></g>
              <g class="roads" transform="matrix(.3763 0 0 .3635 538 -8)"><use href="#y2" class="yc"/><use href="#o2" class="oc"/><use href="#r2" class="rc"/><use href="#y2" class="yf"/><use href="#o2" class="of"/><use href="#r2" class="rf"/><use href="#t2" class="tc"/><use href="#t2" class="tf"/><path class="dot" d="M150 110L265 345 330 370 500 410 830 570 1100 690 1110 760 1130 1100 1160 1250 1200 1310M45 22L0 180"/><path class="metro" d="M720 1568L740 1500 830 1480 1080 1320 1200 1325 1440 1230"/><path class="metro" d="M430 1060L560 1170 620 1290M450 1070L590 1250"/><path class="bound" d="M600 22L680 130 640 180 540 280 480 400 490 480 560 550 600 640V790L545 820 530 960 500 1120 390 1310 385 1420 420 1500 560 1540"/><path fill="#7a80b0" d="M1115 813h30v30h-30zM147 991h30v30h-30zM511 1175h30v30h-30zM803 1427h30v30h-30z"/></g>
              <g class="roads" transform="matrix(.3635 0 0 .3444 -12 552)"><use href="#y3" class="yc"/><use href="#o3" class="oc"/><use href="#r3" class="rc"/><use href="#y3" class="yf"/><use href="#o3" class="of"/><use href="#r3" class="rf"/><use href="#t3" class="tc"/><use href="#t3" class="tf"/><path class="metro" d="M110 990V1180Q115 1230 160 1235H260Q295 1240 295 1290V1590M900 280Q920 350 960 400M1190 420Q1400 510 1500 460L1568 420"/><path class="dot" d="M930 100L940 190 1120 280M1080 430L1055 560 1065 790M1035 1030L1010 1090 960 1170 930 1590"/><path class="bound" d="M1568 1160L1500 1130 1420 1220 1280 1240H1110L1000 1150 880 1060 780 1040 750 1080 900 1210 915 1270 870 1420"/></g>
              <g class="roads" transform="matrix(.3763 0 0 .3444 538 552)"><use href="#y4" class="yc"/><use href="#o4" class="oc"/><use href="#y4" class="yf"/><use href="#o4" class="of"/><path class="metro" d="M0 455L100 380 180 295 280 302 490 295Q510 290 510 260V130Q515 110 540 100L700 40 725 0"/><path class="bound" d="M660 0L670 100 650 280 520 320 540 430 480 470 500 530 600 590 640 740 610 850 660 1000 640 1100 550 1170 560 1210 720 1350 920 1510M0 1150L100 1170 180 1270 280 1530M1090 1370L1140 1568M1110 1380L1150 1480 1230 1568"/><path d="M1344 1106l6 8v18l24 14v8l-24-8v10l8 8v4l-14-4-14 4v-4l8-8v-10l-24 8v-8l24-14v-18z" fill="#8461c4"/></g>

              <g class="place">
                <text x="219" y="18">Hebbal</text><text x="13" y="42">St</text><text x="341" y="130">Sulthanpalya</text><text x="550" y="27">Nagavara</text><text x="598" y="87">HBR Layout</text><text x="737" y="31">Hennur</text><text x="624" y="152">Hennur</text><text x="727" y="192">Kalyan Nagar</text><text x="994" y="135">Jayantinagara</text><text x="181" y="180">Ganga Nagar</text><text x="530" y="207">Kadugondanahalli</text><text x="705" y="271">Kammanahalli</text><text x="848" y="279">Banaswadi</text><text x="1074" y="221">K</text><text x="1066" y="287">Ra</text><text x="362" y="293">Deverajivanahalli</text><text x="103" y="312">Sadashivanagar</text><text x="247" y="342">JC Nagar</text><text x="585" y="332">Lingarajapuram</text><text x="483" y="385">Richards Town</text><text x="98" y="426">Guttahalli</text><text x="348" y="454">Benson Town</text><text x="425" y="496">Cleveland Town</text><text x="60" y="504">shadripuram</text><text x="863" y="470">Baiyyappanahalli</text>
                <text x="126" y="576">High Grounds</text><text x="383" y="579">Shivajinagar</text><text x="562" y="668">Halasuru</text><text x="298" y="738">Shanthala Nagar</text><text x="68" y="752">Chikkapete</text><text x="454" y="800">Victoria Layout</text><text x="464" y="847">Austin Town</text><text x="61" y="881">Kalasipalya</text><text x="282" y="888">Shanti Nagar</text><text x="53" y="934">VV Puram</text><text x="451" y="945">Neelasandra</text><text x="270" y="981">Wilson Garden</text><text x="221" y="1054">Someshwaranagar</text><text x="413" y="1045">Adugodi</text>
                <text x="985" y="571">C V Raman</text><text x="985" y="599">Nagar</text><text x="839" y="711">Thippasandra</text><text x="899" y="765">Jeevan Bhima</text><text x="899" y="792">Nagar</text><text x="791" y="834">Kodihalli</text><text x="970" y="837">Vimanapura</text><text x="908" y="902">Murugeshpalaya</text><text x="845" y="1021">Challaghatta</text><text x="586" y="1021">Ejipura</text>
                <g class="from"><text x="962" y="351">Dooravanin</text><text x="1018" y="706">Malles</text><text x="994" y="763">Lal Baha</text><text x="985" y="790">Shastri Na</text><text x="1006" y="1006">Kempap</text></g>
                <text class="city" x="200" y="682">Bengaluru</text>
              </g>
              <g class="zone">
                <g fill="#7a7740"><text x="142" y="37">University</text><text x="143" y="58">of Agricultural</text><text x="142" y="80">Sciences,</text><text x="142" y="101">Hebbal</text></g>
                <g fill="#5f9f5c"><text x="196" y="415">Bangalore</text><text x="196" y="436">Palace</text><text x="196" y="457">Grounds</text></g>
                <g fill="#a0383d"><text x="843" y="400">Madras</text><text x="843" y="421">Engineers</text><text x="843" y="443">Group</text><text x="657" y="536">Madras</text><text x="657" y="558">Engineers</text><text x="657" y="580">Group</text><text x="640" y="915">Army Service</text><text x="640" y="937">Corps -</text><text x="640" y="958">ASC North</text><text x="781" y="1045">Army Service</text><text x="781" y="1066">Corps -</text><text x="781" y="1087">ASC South</text></g>
                <text class="from" x="999" y="976" fill="#7c5bb8">HAL Airpor</text>
              </g>
              <g class="street">
                <text transform="translate(131 312) rotate(90)">Bellary Road</text>
                <text><textPath href="#lp1">Banaswadi Road</textPath></text>
                <text><textPath href="#lp2">Chikka Banaswadi Road</textPath></text>
                <text><textPath href="#lp4">Inner Ring Road</textPath></text>
                <text><textPath href="#lp5">Suranjandas Road</textPath></text>
                <text><textPath href="#lp6">GS Flyover</textPath></text>
                <text transform="translate(368 904) rotate(-84)">Hosur Road</text>
                <text transform="translate(390 1051) rotate(62)">Hosur R</text>
                <text transform="translate(508 1090) rotate(-55)">et Road</text>
                <text transform="translate(832 861) rotate(3)">HAL Old Airport Road</text>
                <text class="ward" transform="translate(738 152) rotate(-58)">Bangalore East</text>
              </g>

              <g fill="#222" fill-opacity=".45" filter="url(#soft)"><path d="M432 689l30-30 14 6-6 14zM400 725l32-32 14 6-8 16zM350 732l34-36 14 6-8 18z"/></g>
              <defs><g id="drop"><path d="M0 0C-6-15-26-28-26-45A26 26 0 0 1 26-45C26-28 6-15 0 0Z" fill="url(#mk)" stroke="#a83a2c" stroke-width="1"/></g>
              <g id="info"><circle cy="-43" r="13" fill="#fff"/><path d="M-2-50h5v4h-5zM-4-44h7v7h3v3h-9v-3h3v-4h-4z" fill="#c24232"/></g></defs>
              <use href="#drop" x="432" y="689"/><use href="#info" x="432" y="689"/>
              <use href="#drop" x="362" y="712"/><use href="#drop" x="356" y="722"/>
              <use href="#drop" x="400" y="725"/><use href="#info" x="400" y="725"/>
              <use href="#drop" x="350" y="732"/><use href="#info" x="350" y="732"/>
            </svg>
            <div class="zoom"><button aria-label="Zoom in"><svg viewBox="0 0 22 22"><path d="M11 0v22M0 11h22" stroke="#000" stroke-width="3.500"/></svg></button><button aria-label="Zoom out"><svg viewBox="0 0 22 22"><path d="M0 11h22" stroke="#000" stroke-width="3.500"/></svg></button></div>
            <div class="credit"><svg viewBox="0 0 18 12"><path d="M0 0h18v6H0z" fill="#4c7be1"/><path d="M0 6h18v6H0z" fill="#ffd500"/></svg><span><a href="#leaflet">Leaflet</a> | © <a href="#osm">OpenStreetMap</a> contributors</span></div>
          </div>
        </section>
      </div>
    </div>
    <div class="scroll-thumb"></div>
  </main>
</div>
</body>
</html>
```

FILE: styles.css
```css
* { box-sizing: border-box; }
body {
  margin: 0;
  height: 100vh;
  display: flex;
  flex-direction: column;
  overflow: hidden;
  background: #0f1116;
  color: #e3e6ec;
  font: 26px/46px "Noto Sans CJK SC", "Noto Sans", sans-serif;
}
p, h2, h3, h4, ol { margin: 0; padding: 0; }
button { border: 0; padding: 0; background: none; color: inherit; font: inherit; display: flex; align-items: center; justify-content: center; }
svg { display: block; flex: none; }
.sprite { position: absolute; width: 0; height: 0; }

/* Browser chrome */
.browser { flex: none; background: #1f2221; color: #c9cac9; font: 24px/32px Inter, "Noto Sans", sans-serif; }
.tabstrip { display: flex; height: 82px; align-items: center; }
.lights { display: flex; gap: 16px; width: 150px; padding-left: 26px; }
.light { width: 24px; height: 24px; border-radius: 50%; }
.red { background: #ed6a5f; }
.grey { background: #3f4241; }
.green { background: #61c554; }
.tab { flex: 0 0 416px; min-width: 0; height: 68px; display: flex; align-items: center; padding: 0 26px 0 22px; position: relative; margin-top: 2px; }
.tab + .tab:not(.active)::before { content: ""; position: absolute; left: -2px; top: 18px; width: 4px; height: 32px; border-radius: 2px; background: #3d403f; }
.fav { width: 32px; height: 32px; margin-right: 16px; }
.tab-title { flex: 1; display: flex; align-items: center; min-width: 0; overflow: hidden; white-space: nowrap; margin-right: 20px; -webkit-mask-image: linear-gradient(90deg, #000 84%, transparent 99%); mask-image: linear-gradient(90deg, #000 84%, transparent 99%); }
.tab-close svg { width: 24px; height: 24px; }
.tab.active { flex-basis: 402px; margin: 14px 0 0 4px; padding: 0 20px 12px 16px; background: #3c3c3c; border-radius: 20px 20px 0 0; color: #e6e6e6; }
.tab.active::before, .tab.active::after { content: ""; position: absolute; bottom: 0; width: 24px; height: 24px; }
.tab.active::before { left: -24px; background: radial-gradient(circle at 0 0, transparent 23px, #3c3c3c 24px); }
.tab.active::after { right: -24px; background: radial-gradient(circle at 100% 0, transparent 23px, #3c3c3c 24px); }
.tab-pin { width: 12px; height: 24px; margin: 0 19px 0 7px; }
.new-tab { margin-left: 30px; }
.new-tab svg { width: 22px; height: 22px; }
.tab-search { width: 56px; height: 56px; border-radius: 20px; background: #3c3c3c; margin: 2px 12px 0 auto; }
.tab-search svg { width: 22px; height: 22px; }
.toolbar { display: flex; align-items: center; height: 94px; background: #3c3c3c; border-radius: 20px 20px 0 0; border-bottom: 2px solid #474747; }
.nav { display: flex; gap: 48px; width: 240px; padding-left: 32px; }
.nav svg { width: 24px; height: 24px; }
.dim { color: #7d7d7d; }
.omnibox { flex: 1; display: flex; align-items: center; height: 68px; border-radius: 34px; background: #282828; padding: 0 34px 0 10px; gap: 37px; }
.omnibox svg { width: 28px; height: 28px; }
.site-info { width: 48px; height: 48px; border-radius: 50%; background: #3c3c3c; color: #e3e3e3; }
.site-info svg { width: 26px; height: 26px; }
.url { flex: 1; min-width: 0; border: 0; outline: 0; background: none; color: #dedede; font: inherit; font-size: 27px; padding: 0; margin-left: -21px; }
.actions { display: flex; align-items: center; gap: 34px; width: 276px; padding-left: 36px; }
.actions svg { width: 34px; height: 34px; }
.bar { width: 3px; height: 32px; background: #5f5f5f; }
.avatar { width: 40px; height: 40px; border-radius: 50%; background: #1d4a40; color: #fff; font-size: 20px; margin: 0 8px 0 0; }
.actions .dots { width: 18px; height: 34px; }
.rainbow { flex: none; height: 4px; background: linear-gradient(90deg, #ee5a55, #f6a173 50%, #fbfa8c); }

/* Sidebar */
.app { flex: 1; min-height: 0; display: flex; }
.sidebar { flex: 0 0 605px; background: #262730; overflow: hidden; }
.sidebar-head { display: flex; justify-content: flex-end; height: 172px; padding: 28px 28px 0 0; }
.sidebar-head button { width: 32px; height: 32px; color: #fff; }
.sidebar-head svg { width: 32px; height: 32px; }
.sidebar-body { display: flex; flex-direction: column; gap: 29px; padding: 0 43px; }
.success { background: #33493c; border-radius: 14px; padding: 27px 29px 28px; }
.panel { background: #1e252e; border-radius: 18px; }
.about { padding: 57px 29px 58px; }
h2, h3, h4 { color: #fff; font-weight: 700; }
.about h3 { font-size: 31px; line-height: 43px; margin-bottom: 58px; }
.how { background: #2f3545; border-radius: 14px; padding: 63px 40px 73px 44px; }
.how h4 { display: flex; align-items: center; gap: 6px; font-size: 25px; line-height: 36px; margin-bottom: 43px; }
.emoji { width: 28px; height: 28px; }
.how ol { margin-top: 29px; padding-left: 94px; }
.how li + li { margin-top: 15px; }
.how li::marker { content: counter(list-item) ".\2002\2009\2009"; }
.powered { text-align: center; padding: 28px 0 53px; color: #9aa4b5; }
.powered p + p { margin-top: 30px; color: #fff; font-size: 25px; }

/* Main column */
.main { flex: 1; min-width: 0; position: relative; overflow: hidden; }
.app-head { display: flex; justify-content: flex-end; align-items: center; height: 78px; gap: 41px; padding-right: 31px; color: #fff; font-size: 23px; }
.deploy { padding-bottom: 3px; }
.app-head .dots { width: 18px; height: 32px; }
.content { display: flex; flex-direction: column; gap: 28px; padding: 23px 154px 0 144px; }
.search { display: grid; grid-template-columns: 969fr 640fr 310fr; gap: 29px; }
.label-row { display: flex; justify-content: space-between; align-items: center; height: 40px; margin-bottom: 11px; font-size: 23px; line-height: 40px; }
.label-row label { display: flex; align-items: center; gap: 4px; }
.label-row label .emoji { width: 26px; height: 26px; }
.label-row button svg { width: 27px; height: 27px; color: #9a9ca3; margin: 4px 2px 0 0; }
.field input { width: 100%; height: 71px; border: 1px solid #2f3747; border-radius: 14px; background: #262730; color: #fff; font: inherit; padding: 0 15px 4px 14px; outline: 0; }
.go { height: 86px; margin-top: 58px; padding-bottom: 2px; border-radius: 36px; background: #ed5a53; gap: 7px; color: #e8e6ee; }
.go .emoji { width: 30px; height: 30px; }
.columns { display: grid; grid-template-columns: 1fr 1fr; gap: 29px; }
.columns > section { min-width: 0; }
h2 { display: flex; align-items: center; gap: 12px; font-size: 44px; line-height: 60px; padding: 16px 0 31px; height: 107px; white-space: nowrap; }
.clipboard { width: 48px; height: 52px; }
.mapicon { width: 50px; height: 44px; }
.anchor { width: 72px; height: 72px; margin: 0 -14px 0 auto; border-radius: 50%; background: #141821; color: #9a9ca3; display: flex; align-items: center; justify-content: center; }
.anchor svg { width: 34px; height: 34px; }
.metrics { display: grid; grid-template-columns: 1fr 1fr; gap: 29px; margin-bottom: 18px; }
.metric, .card { background: #1e252e; border: 1px solid #2b3442; box-shadow: 0 4px 8px rgba(0, 0, 0, .25); }
.metric { display: flex; flex-direction: column; text-align: center; border-radius: 14px; padding: 27px 0 29px; }
.metric strong { font-size: 39px; line-height: 69px; color: #ee5952; }
.metric span { font-size: 23px; line-height: 42px; color: #9aa4b5; }
.card { border-radius: 18px; padding: 56px 30px 60px 43px; margin-bottom: 36px; }
.card h3 { font-size: 44px; line-height: 60px; margin-bottom: 58px; }
.card p + p { margin-top: 15px; }
.card b { color: #9aa4b5; font-size: 25px; }
.badge { display: flex; width: fit-content; align-items: center; height: 50px; margin-top: 13px; padding: 0 14px; border-radius: 22px; background: #54a551; color: #fff; }
.card .coords { display: flex; align-items: center; gap: 2px; margin-top: 16px; font-size: 23px; line-height: 40px; color: #6c7789; }

/* Map */
.map { position: relative; width: 1080px; background: #fbfafa; overflow: hidden; }
.map-art { width: 100%; height: auto; }
.zoom { position: absolute; left: 19px; top: 19px; border: 2px solid #b5b5b5; border-radius: 7px; background: #fff; overflow: hidden; }
.zoom button { width: 54px; height: 54px; padding-top: 8px; }
.zoom button + button { border-top: 1px solid #ccc; }
.zoom svg { width: 22px; height: 22px; }
.credit { position: absolute; right: 0; bottom: 0; display: flex; gap: 5px; align-items: center; padding: 0 9px; background: rgba(255, 255, 255, .8); color: #333; font: 18px/28px "Liberation Sans", sans-serif; }
.credit svg { width: 18px; height: 13px; }
.credit a { color: #2a78ae; }
.scroll-thumb { position: absolute; right: 0; top: 83px; width: 10px; height: 559px; border-radius: 5px 0 0 5px; background: #68696c; }
.lane { fill: none; stroke: #fff; stroke-width: 5px; }
.roads { fill: none; stroke-linejoin: round; }
.yc { stroke: #d3d59c; stroke-width: 22px; }
.yf { stroke: #f6f9bf; stroke-width: 18px; }
.oc { stroke: #d9ab74; stroke-width: 27px; }
.of { stroke: #f8d6a8; stroke-width: 21px; }
.rc { stroke: #d88a78; stroke-width: 33px; }
.rf { stroke: #efb09c; stroke-width: 28px; }
.tc { stroke: #6d6d6d; stroke-width: 14px; }
.tf { stroke: #d8d8d8; stroke-width: 4px; stroke-dasharray: 28px 22px; }
.metro { stroke: #8f8f8f; stroke-width: 11px; }
.dot { stroke: #6d6d6d; stroke-width: 12px; stroke-dasharray: 11px 17px; }
.bound { stroke: #b49dba; stroke-width: 6px; stroke-dasharray: 30px 8px 6px 8px; }
.place, .zone, .street { font-family: "Noto Sans", sans-serif; text-anchor: middle; paint-order: stroke; stroke: rgba(255, 255, 255, .7); stroke-width: 3px; stroke-linejoin: round; }
.place { font-size: 21px; fill: #444; }
.city { font-size: 27px; }
.from { text-anchor: start; }
.zone { font-size: 17px; font-style: italic; }
.street { font-size: 14px; fill: #4a3f2f; text-anchor: start; stroke-width: 0; }
.ward { font-size: 17px; fill: #a88bb0; }
```
